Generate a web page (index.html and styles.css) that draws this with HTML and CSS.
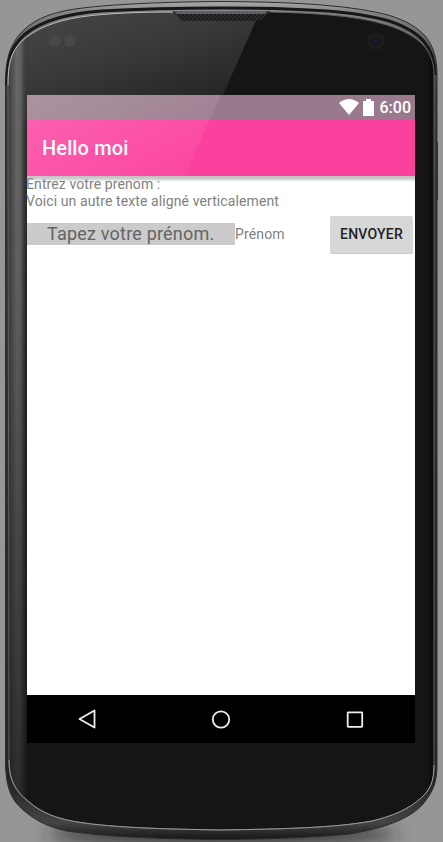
FILE: index.html
```html
<!DOCTYPE html>
<html lang="fr">
<head>
<meta charset="utf-8">
<title>Hello moi</title>
<link rel="stylesheet" href="styles.css">
</head>
<body>
<div class="phone">
  <svg class="frame" viewBox="0 0 443 842" aria-hidden="true">
    <defs>
      <linearGradient id="gloss" x1="0" y1="0" x2=".7" y2="1"><stop offset="0" stop-color="#4a4a4a"/><stop offset=".5" stop-color="#3a3a3a"/><stop offset="1" stop-color="#222"/></linearGradient>
      <linearGradient id="rim" x1="0" y1="0" x2="0" y2="1"><stop offset="0" stop-color="#aaa"/><stop offset=".012" stop-color="#858585"/><stop offset=".06" stop-color="#555"/><stop offset=".12" stop-color="#383838"/><stop offset=".93" stop-color="#242424"/><stop offset=".98" stop-color="#444"/><stop offset="1" stop-color="#161616"/></linearGradient>
      <linearGradient id="side" x1="0" y1="0" x2="1" y2="0"><stop offset="0" stop-color="#3c3c3c"/><stop offset=".45" stop-color="#6a6a6a"/><stop offset=".65" stop-color="#606060"/><stop offset="1" stop-color="#303030" stop-opacity="0"/></linearGradient>
      <linearGradient id="sideFade" x1="0" y1="0" x2="0" y2="1"><stop offset="0" stop-color="#fff"/><stop offset=".35" stop-color="#ddd"/><stop offset="1" stop-color="#333"/></linearGradient>
      <linearGradient id="ground" x1="0" y1="0" x2="0" y2="1"><stop offset="0" stop-color="#2e2e2e"/><stop offset=".45" stop-color="#1d1d1d"/><stop offset="1" stop-color="#171717"/></linearGradient>
      <mask id="fade"><rect width="30" height="842" fill="url(#sideFade)"/></mask>
      <filter id="soft" x="-20%" y="-100%" width="140%" height="300%"><feGaussianBlur stdDeviation="9"/></filter>
      <pattern id="mesh" width="4" height="4" patternUnits="userSpaceOnUse"><rect width="4" height="4" fill="#2b2b2b"/><circle cx="1" cy="1" r=".8" fill="#0b0b0b"/><circle cx="3" cy="3" r=".8" fill="#0b0b0b"/></pattern>
      <path id="panel" d="M8 85C8 66 10 53 21 42C34 29 55 21 80 17C108 13 140 12 175 12H270C310 13 355 15 387 25C420 36 434 50 434 75V765C434 782 430 790 421 798C409 809 393 816 372 821C334 828 280 829 222 830C167 829 104 828 67 820C50 816 40 811 29 802C15 791 9 780 9 760Z"/>
      <clipPath id="inner"><use href="#panel"/></clipPath>
    </defs>
    <ellipse cx="222" cy="834" rx="175" ry="14" fill="#222" opacity=".75" filter="url(#soft)"/>
    <path d="M436 142h2v58h-2z" fill="#333"/>
    <path d="M5.500 90C5 61 9 48 19 35C31 21 47 14 69 10C98 5 154 2 222 1.500C303 2 353 6 388 15C424 26 437 43 437 75V765C437 782 433 792 423 804C410 819 384 828 350 834C309 838 265 839 222 839.500C165 839 107 837 67 831C47 827 32 819 19 806C9 796 5.500 782 5.500 760Z" fill="url(#rim)" stroke="#2c2c2c"/>
    <path d="M7 85C7 59 11 47 24 35C42 20 67 14 101 11C137 9 179 8 222 8C303 8 355 11 389 21C422 32 435 48 435 75" fill="none" stroke="#171717" stroke-width="3"/>
    <g clip-path="url(#inner)">
      <rect width="443" height="842" fill="#151515"/>
      <rect width="27" height="842" fill="url(#ground)"/>
      <path d="M0 0H265L223 95V120H0Z" fill="url(#gloss)"/>
      <rect x="8" width="20" height="842" fill="url(#side)" mask="url(#fade)"/>
      <path d="M429 60h10v730h-10z" fill="#080808" opacity=".6"/>
    </g>
    <use href="#panel" fill="none" stroke="#606060"/>
    <path d="M8 85C8 66 10 53 21 42C34 29 55 21 80 17C108 13 140 12 175 12" fill="none" stroke="#b8bcbc"/>
    <path d="M9 760C9 780 15 791 29 802C40 811 50 816 67 820C104 828 167 829 222 830C280 829 334 828 372 821C393 816 409 809 421 798C430 790 434 782 434 765" fill="none" stroke="#979797"/>
    <path d="M172 11H270L264 17Q261 21 255 21H182Z" fill="url(#mesh)"/>
    <path d="M174 11H268L265 14H177Z" fill="#596067"/>
    <circle cx="55" cy="41" r="6" fill="#484848"/><circle cx="70" cy="41" r="6" fill="#484848"/>
    <circle cx="376" cy="41" r="9" fill="#1c1c1d"/><circle cx="376" cy="41" r="4.500" fill="#17171c"/><circle cx="375.500" cy="41" r="1.500" fill="#202044"/>
  </svg>

  <main class="screen">
    <header class="status">
      <svg class="wifi" viewBox="0 0 20 16"><path d="M0 4Q10-4 20 4L10 16Z"/></svg>
      <svg class="battery" viewBox="0 0 11 17"><path d="M3 0H8V2H11V17H0V2H3Z"/></svg>
      <span class="clock">6:00</span>
    </header>
    <div class="appbar"><h1 class="title">Hello moi</h1></div>
    <section class="content">
      <p class="label">Entrez votre prenom :</p>
      <p class="label">Voici un autre texte aligné verticalement</p>
      <div class="row">
        <div class="field">Tapez votre prénom.</div>
        <span class="name">Prénom</span>
        <button class="send">ENVOYER</button>
      </div>
    </section>
    <nav class="nav">
      <svg class="key" viewBox="0 0 24 24"><path d="M19.500 3.500V20.500L4.500 12Z"/></svg>
      <svg class="key" viewBox="0 0 24 24"><circle cx="12" cy="12.500" r="8.200"/></svg>
      <svg class="key" viewBox="0 0 24 24"><rect x="4.700" y="5.300" width="14.500" height="14.500" rx=".5"/></svg>
    </nav>
    <svg class="glare" viewBox="0 0 388 86" aria-hidden="true">
      <defs><linearGradient id="shine" x1="0" y1="0" x2="1" y2=".8"><stop offset="0" stop-color="#fff" stop-opacity=".19"/><stop offset="1" stop-color="#fff" stop-opacity=".02"/></linearGradient></defs>
      <path d="M0 0H194L155 86H0Z" fill="url(#shine)"/>
    </svg>
  </main>
</div>
</body>
</html>
```

FILE: styles.css
```css
* { box-sizing: border-box; }
body { margin: 0; background: #969696; font-family: Roboto, sans-serif; overflow: hidden; }
.phone { position: relative; width: 443px; height: 842px; padding: 95px 28px 99px 27px; }
.frame { position: absolute; inset: 0; width: 443px; height: 842px; }
.screen { position: relative; display: flex; flex-direction: column; width: 388px; height: 648px; background: #fff; }
.status { display: flex; align-items: center; justify-content: flex-end; height: 25px; padding-right: 4px; background: #997a8c; color: #fff; }
.status svg { fill: #fff; }
.wifi { width: 20px; height: 16px; margin: -2px 4px 0 0; }
.battery { width: 11px; height: 17px; margin: -1px 6px 0 0; }
.clock { font-size: 16px; font-weight: 500; line-height: 25px; }
.appbar { display: flex; align-items: center; height: 56px; padding-left: 15px; background: #fb419e; }
.title { margin: 0; color: #fff; font-size: 20px; font-weight: 500; line-height: 24px; letter-spacing: .12px; }
.content { flex: 1; background: linear-gradient(#bdbdbd, #ccc 3px, #f5f5f5 5px, #fff 6px) no-repeat; color: #818181; font-size: 14px; }
.label { margin: 0 0 0 -1px; line-height: 17px; letter-spacing: .1px; }
.row { display: flex; align-items: center; height: 38px; margin-top: 6px; padding-right: 2px; }
.field { width: 208px; height: 22px; margin-top: -2px; padding-left: 20px; background: #cbcbcb; color: #636363; font-size: 18px; line-height: 22px; letter-spacing: .2px; white-space: nowrap; }
.name { margin-top: -2px; line-height: 17px; letter-spacing: .15px; }
.send { width: 83px; height: 38px; margin-left: auto; padding: 0 0 2px; border: 0; border-radius: 2px; background: #d6d8d7; box-shadow: inset 0 -1px #c8caca; color: #222; font: 500 14px Roboto, sans-serif; letter-spacing: .2px; }
.nav { display: flex; justify-content: space-between; align-items: center; height: 48px; padding: 0 48px; background: #000; }
.key { width: 24px; height: 24px; fill: none; stroke: #eee; stroke-width: 1.8; stroke-linejoin: round; }
.glare { position: absolute; top: 0; left: 0; width: 388px; height: 86px; }
```
